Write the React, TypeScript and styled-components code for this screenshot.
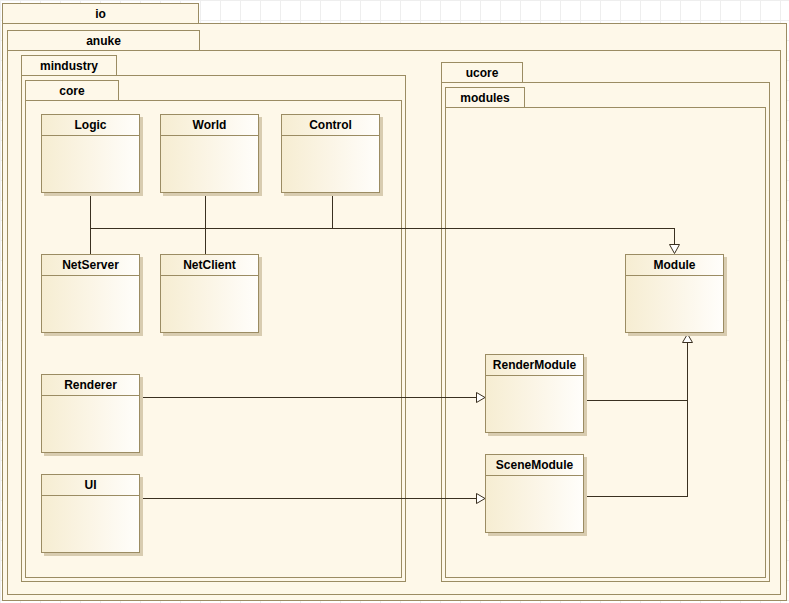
import * as React from 'react';
import styled, { createGlobalStyle } from 'styled-components';

const GlobalStyle = createGlobalStyle`
    body {
        margin: 0;
        background: #ffffff;
        font-family: 'Liberation Sans', Arial, sans-serif;
    }
`;

const Canvas = styled.div`
    position: relative;
    width: 789px;
    height: 603px;
    overflow: hidden;
    background-color: #ffffff;
    background-image: linear-gradient(#eeeeee 1px, transparent 1px),
        linear-gradient(90deg, #eeeeee 1px, transparent 1px);
    background-size: 20px 20px;
`;

const Tab = styled.div`
    position: absolute;
    box-sizing: border-box;
    height: 21px;
    background: #fef8e9;
    border: 1px solid #9b8c63;
    font-size: 12px;
    font-weight: bold;
    color: #000;
    display: flex;
    align-items: center;
    justify-content: center;
`;

const PackageBody = styled.div`
    position: absolute;
    box-sizing: border-box;
    background: #fef8e9;
    border: 1px solid #9b8c63;
`;

const ClassBox = styled.div`
    position: absolute;
    box-sizing: border-box;
    width: 99px;
    height: 79px;
    border: 1px solid #9b8c63;
    background: linear-gradient(90deg, #f6edd2 0%, #fbf5e6 50%, #fffefb 100%);
    box-shadow: 3px 3px 0 #d8ccb0;
    display: flex;
    flex-direction: column;
`;

const ClassName = styled.div`
    height: 21px;
    box-sizing: border-box;
    border-bottom: 1px solid #9b8c63;
    font-size: 12px;
    font-weight: bold;
    display: flex;
    align-items: center;
    justify-content: center;
`;

const Wires = styled.svg`
    position: absolute;
    left: 0;
    top: 0;
`;

interface IPkg { name: string; x: number; y: number; tw: number; w: number; h: number; }

const packages: IPkg[] = [
    { name: 'io', x: 2, y: 3, tw: 197, w: 785, h: 598 },
    { name: 'anuke', x: 7, y: 30, tw: 193, w: 774, h: 565 },
    { name: 'mindustry', x: 21, y: 55, tw: 96, w: 385, h: 527 },
    { name: 'core', x: 25, y: 80, tw: 94, w: 377, h: 498 },
    { name: 'ucore', x: 441, y: 62, tw: 82, w: 329, h: 520 },
    { name: 'modules', x: 445, y: 87, tw: 80, w: 321, h: 491 },
];

const classes = [
    { name: 'Logic', x: 41, y: 114 },
    { name: 'World', x: 160, y: 114 },
    { name: 'Control', x: 281, y: 114 },
    { name: 'NetServer', x: 41, y: 254 },
    { name: 'NetClient', x: 160, y: 254 },
    { name: 'Renderer', x: 41, y: 374 },
    { name: 'UI', x: 41, y: 474 },
    { name: 'Module', x: 625, y: 254 },
    { name: 'RenderModule', x: 485, y: 354 },
    { name: 'SceneModule', x: 485, y: 454 },
];

const stroke = '#3a3020';

const App = (): JSX.Element => (
    <Canvas>
        <GlobalStyle />
        {packages.map((p) => (
            <React.Fragment key={p.name}>
                <Tab style={{ left: p.x, top: p.y, width: p.tw }}>{p.name}</Tab>
                <PackageBody style={{ left: p.x, top: p.y + 20, width: p.w, height: p.h - 20 }} />
            </React.Fragment>
        ))}
        <Wires width={789} height={603}>
            <g stroke={stroke} strokeWidth={1} fill="none" shapeRendering="crispEdges">
                <path d="M90.5 193 V254 M205.5 193 V254 M332.5 193 V228.5 M90 228.5 H674.5 V244" />
                <path d="M140 397.5 H476 M140 498.5 H476" />
                <path d="M584 400.5 H687.5 M584 496.5 H687.5 V343" />
            </g>
            <g stroke={stroke} strokeWidth={1} fill="#fff">
                <polygon points="669.5,244.5 679.5,244.5 674.5,253.5" />
                <polygon points="476.5,392.5 476.5,402.5 485,397.5" />
                <polygon points="476.5,493.5 476.5,503.5 485,498.5" />
                <polygon points="682.5,342.5 692.5,342.5 687.5,334" />
            </g>
        </Wires>
        {classes.map((c) => (
            <ClassBox key={c.name} style={{ left: c.x, top: c.y }}>
                <ClassName>{c.name}</ClassName>
            </ClassBox>
        ))}
    </Canvas>
);

export default App;
